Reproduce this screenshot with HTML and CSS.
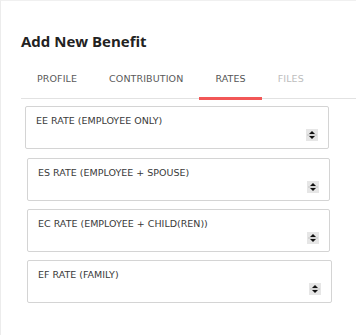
FILE: index.html
```html
<!DOCTYPE html>
<html>
<head>
<meta charset="utf-8">
<link rel="stylesheet" href="styles.css">
</head>
<body>
<div class="page">
  <h2 class="title">Add New Benefit</h2>
  <nav class="tabs">
    <div class="tab">PROFILE</div>
    <div class="tab">CONTRIBUTION</div>
    <div class="tab active">RATES</div>
    <div class="tab disabled">FILES</div>
  </nav>
  <div class="fields">
    <div class="field f1">
      <div class="label">EE RATE (EMPLOYEE ONLY)</div>
      <svg class="spin" viewBox="0 0 12 12" width="12" height="12"><rect width="12" height="12" fill="#e6e6e6"/><path d="M3 5 L9 5 L6 2 Z" fill="#111"/><rect x="1" y="5.6" width="10" height="0.8" fill="#b8b8b8"/><path d="M3 7 L9 7 L6 10 Z" fill="#111"/></svg>
    </div>
    <div class="field f2">
      <div class="label">ES RATE (EMPLOYEE + SPOUSE)</div>
      <svg class="spin" viewBox="0 0 12 12" width="12" height="12"><rect width="12" height="12" fill="#e6e6e6"/><path d="M3 5 L9 5 L6 2 Z" fill="#111"/><rect x="1" y="5.6" width="10" height="0.8" fill="#b8b8b8"/><path d="M3 7 L9 7 L6 10 Z" fill="#111"/></svg>
    </div>
    <div class="field f3">
      <div class="label">EC RATE (EMPLOYEE + CHILD(REN))</div>
      <svg class="spin" viewBox="0 0 12 12" width="12" height="12"><rect width="12" height="12" fill="#e6e6e6"/><path d="M3 5 L9 5 L6 2 Z" fill="#111"/><rect x="1" y="5.6" width="10" height="0.8" fill="#b8b8b8"/><path d="M3 7 L9 7 L6 10 Z" fill="#111"/></svg>
    </div>
    <div class="field f4">
      <div class="label">EF RATE (FAMILY)</div>
      <svg class="spin" viewBox="0 0 12 12" width="12" height="12"><rect width="12" height="12" fill="#e6e6e6"/><path d="M3 5 L9 5 L6 2 Z" fill="#111"/><rect x="1" y="5.6" width="10" height="0.8" fill="#b8b8b8"/><path d="M3 7 L9 7 L6 10 Z" fill="#111"/></svg>
    </div>
  </div>
</div>
</body>
</html>
```

FILE: styles.css
```css
* { box-sizing: border-box; }
html, body { margin: 0; padding: 0; background: #fff; }
body {
  font-family: "DejaVu Sans", "Noto Sans", sans-serif;
  color: #333;
  width: 356px;
  height: 335px;
  overflow: hidden;
}
.page {
  height: 335px;
  border-left: 1px solid #ececec;
  border-top: 1px solid #f0f0f0;
  padding-left: 20px;
}
.title {
  margin: 0;
  padding-top: 31px;
  font-family: "Open Sans", "DejaVu Sans", sans-serif;
  font-size: 15px;
  line-height: 18px;
  font-weight: 700;
  color: #222;
}
.tabs {
  display: flex;
  margin-top: 19px;
  border-bottom: 1px solid #e2e2e2;
  height: 30px;
}
.tab {
  padding: 4px 16px 0;
  font-size: 9.5px;
  line-height: 12px;
  color: #5a5a5a;
  letter-spacing: 0.1px;
  position: relative;
}
.tab.active { color: #555; }
.tab.active::after {
  content: "";
  position: absolute;
  left: 0; right: 0;
  bottom: -2px;
  height: 3px;
  background: #f25757;
}
.tab.disabled { color: #bdbdbd; }
.fields {
  display: flex;
  flex-direction: column;
  gap: 8px;
  padding-top: 7px;
}
.field {
  border: 1px solid #d4d4d4;
  border-radius: 2px;
  height: 43px;
  padding: 8px 10px 0 10px;
  display: flex;
  flex-direction: column;
  background: #fff;
}
.f1 { margin-left: 4px; width: 304px; }
.f2 { margin-left: 6px; width: 303px; margin-top: 1px; }
.f3 { margin-left: 6px; width: 303px; }
.f4 { margin-left: 6px; width: 305px; }
.label {
  font-size: 9.5px;
  line-height: 12px;
  color: #3a3a3a;
}
.spin {
  align-self: flex-end;
  margin-top: 2px;
  display: block;
}
```
